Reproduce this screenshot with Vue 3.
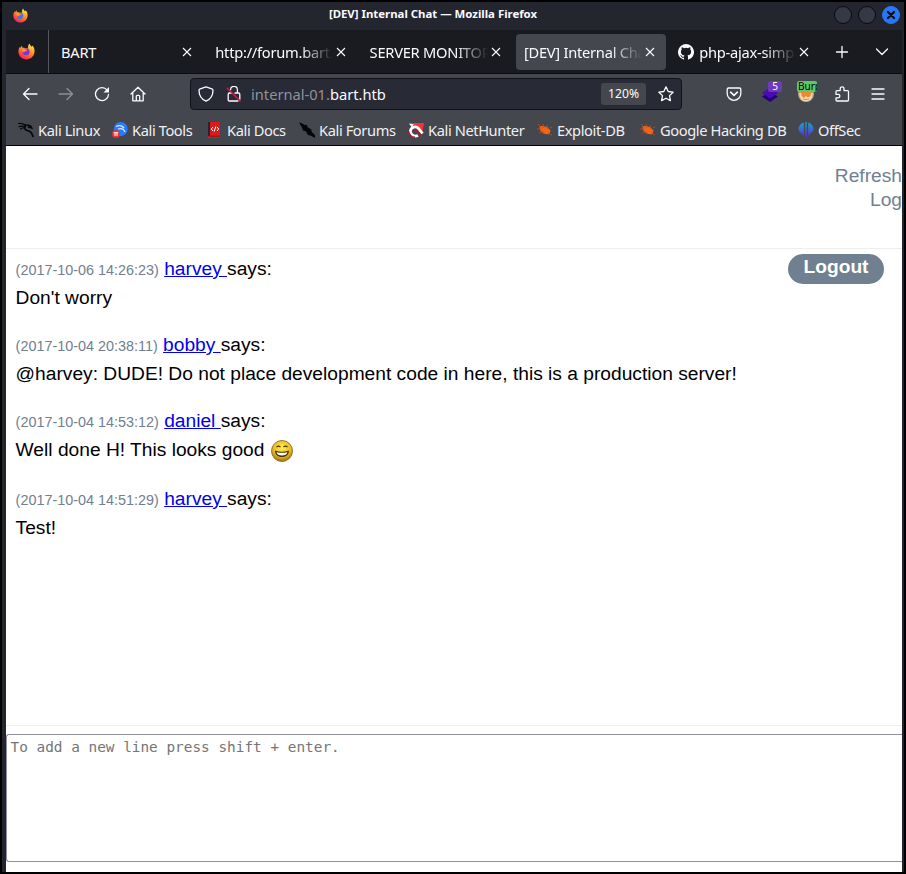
<script setup>
const tabs = [
  { title: 'BART' },
  { title: 'http://forum.bart.htb', fade: true },
  { title: 'SERVER MONITOR', fade: true },
  { title: '[DEV] Internal Chat', fade: true, active: true },
  { title: 'php-ajax-simple', fade: true, github: true },
]

const bookmarks = [
  { label: 'Kali Linux', icon: 'dragon', width: 94 },
  { label: 'Kali Tools', icon: 'tools', width: 95 },
  { label: 'Kali Docs', icon: 'docs', width: 92 },
  { label: 'Kali Forums', icon: 'forums', width: 109 },
  { label: 'Kali NetHunter', icon: 'nethunter', width: 129 },
  { label: 'Exploit-DB', icon: 'bug', width: 103 },
  { label: 'Google Hacking DB', icon: 'bug', width: 158 },
  { label: 'OffSec', icon: 'offsec', width: 80 },
]

const messages = [
  { time: '2017-10-06 14:26:23', user: 'harvey', text: "Don't worry" },
  { time: '2017-10-04 20:38:11', user: 'bobby', text: '@harvey: DUDE! Do not place development code in here, this is a production server!' },
  { time: '2017-10-04 14:53:12', user: 'daniel', text: 'Well done H! This looks good', smiley: true },
  { time: '2017-10-04 14:51:29', user: 'harvey', text: 'Test!' },
]
</script>

<template>
  <div class="window">
    <svg class="defs" width="0" height="0" aria-hidden="true">
      <defs>
        <linearGradient id="flame" x1="0.8" y1="0" x2="0.25" y2="1">
          <stop offset="0" stop-color="#fff044" />
          <stop offset="0.4" stop-color="#ff9a2b" />
          <stop offset="0.75" stop-color="#ff4a3c" />
          <stop offset="1" stop-color="#ee1e70" />
        </linearGradient>
        <linearGradient id="offsec" gradientUnits="userSpaceOnUse" x1="0" y1="0" x2="0" y2="16">
          <stop offset="0" stop-color="#10acc8" />
          <stop offset="1" stop-color="#6a1fdc" />
        </linearGradient>
        <radialGradient id="smile" cx="0.5" cy="0.35" r="0.65">
          <stop offset="0" stop-color="#fff25a" />
          <stop offset="0.65" stop-color="#e8b916" />
          <stop offset="1" stop-color="#9a6d12" />
        </radialGradient>
        <symbol id="fox" viewBox="0 0 16 16">
          <path fill="url(#flame)" d="M10.8.5c.4 1.4 1.2 2 2.1 3 .4-.3.6-.8.7-1.2 1.7 2 2.2 4 1.9 6.5-.5 4-3.7 6.7-7.5 6.7C3.8 15.500.6 12.300.4 8.500c-.1-2 .5-3.800 1.400-5 .1.600.200.900.400 1.200.300-.900.800-1.700 1.500-2.200.100.900.400 1.600.900 2.100.600-.100 1.300 0 1.900.300 1-.300 2.200.100 2.700.800C9.400 4 9.600 1.600 10.800.500z" />
          <circle class="globe" cx="7.600" cy="8.300" r="3.300" />
          <path fill="#ff922e" d="M3.500 5.500c1.500-.600 3-.300 3.500.500l1.800.300c-.200 1-1.100 1.200-1.800 1.400-.500.600-1.200.800-1.700 1.100C4.300 8.600 3.400 7 3.500 5.500z" />
        </symbol>
      </defs>
    </svg>

    <header class="titlebar">
      <svg class="fox blue" width="15" height="15"><use href="#fox" /></svg>
      <span class="caption">[DEV] Internal Chat — Mozilla Firefox</span>
      <div class="controls">
        <i class="control"></i>
        <i class="control"></i>
        <i class="control close">
          <svg width="18" height="18" viewBox="0 0 18 18"><path d="M6 6l6 6M12 6l-6 6" stroke="#0c1118" stroke-width="2.400" stroke-linecap="round" /></svg>
        </i>
      </div>
    </header>

    <nav class="tabbar">
      <div class="view"><svg class="fox violet" width="17" height="17"><use href="#fox" /></svg></div>
      <div class="tabs">
        <div v-for="t in tabs" :key="t.title" class="tab" :class="{ active: t.active }">
          <svg v-if="t.github" class="github" width="16" height="16" viewBox="0 0 16 16"><path fill="#fbfbfe" d="M8 0a8 8 0 0 0-2.530 15.590c.4.070.550-.170.550-.380v-1.490c-2.230.480-2.700-.950-2.700-.950-.360-.920-.890-1.170-.890-1.170-.730-.500.050-.490.050-.490.810.060 1.230.830 1.230.830.720 1.230 1.870.870 2.330.670.070-.520.280-.880.510-1.080-1.780-.200-3.640-.890-3.640-3.950 0-.870.310-1.590.820-2.150-.080-.200-.360-1.020.080-2.120 0 0 .670-.210 2.200.820a7.600 7.600 0 0 1 4 0c1.530-1.040 2.200-.820 2.200-.820.440 1.100.160 1.920.080 2.120.510.560.820 1.270.820 2.150 0 3.070-1.870 3.750-3.650 3.950.290.250.540.730.540 1.480v2.200c0 .210.150.460.550.380A8 8 0 0 0 8 0z" /></svg>
          <span class="title" :class="{ fade: t.fade }">{{ t.title }}</span>
          <svg class="x" width="16" height="16" viewBox="0 0 16 16"><path d="M4 4l8 8M12 4l-8 8" /></svg>
        </div>
      </div>
      <svg class="plus line" width="16" height="16" viewBox="0 0 16 16"><path d="M8 2.500v11M2.500 8h11" /></svg>
      <svg class="chevron line" width="16" height="16" viewBox="0 0 16 16"><path d="M2.500 5L8 10.500 13.500 5" /></svg>
    </nav>

    <div class="toolbar">
      <div class="nav">
        <svg class="line" width="16" height="16" viewBox="0 0 16 16"><path d="M15 8H1.500M7 2.500L1.500 8 7 13.500" /></svg>
        <svg class="line dim" width="16" height="16" viewBox="0 0 16 16"><path d="M1 8h13.500M9 2.500L14.500 8 9 13.500" /></svg>
        <svg class="line" width="16" height="16" viewBox="0 0 16 16"><path d="M13.200 4.200A6.500 6.500 0 1 0 14.500 8.500" /><path fill="#fbfbfe" stroke="none" d="M15 1v5.500H9.500z" /></svg>
        <svg class="line" width="16" height="16" viewBox="0 0 16 16"><path d="M1 8l7-6.700L15 8M2.800 7v7.800h10.400V7M6.300 14.500V10.300c0-.7.4-1 1-1h1.400c.6 0 1 .3 1 1v4.200" /></svg>
      </div>
      <div class="urlbar">
        <svg class="line" width="16" height="16" viewBox="0 0 16 16"><path d="M8 .900l5.800 2c.800.300 1.200.700 1.200 1.400 0 5.500-2.500 9-7 10.900C3.500 13.300 1 9.800 1 4.300c0-.700.400-1.100 1.200-1.400z" /></svg>
        <svg class="line lock" width="16" height="16" viewBox="0 0 16 16"><path d="M4.600 3.800A3.400 3.400 0 0 1 11.400 3.700V7M9 7h3.500c.900 0 1.300.500 1.300 1.300v5M12 15H3.500c-.900 0-1.300-.400-1.300-1.200V8.300C2.200 7.500 2.600 7 3.500 7h2" /><path class="strike" d="M1.300 2.300l12.800 12.700" /></svg>
        <span class="url">internal-01.<b>bart.htb</b></span>
        <span class="zoom">120%</span>
        <svg class="line star" width="16" height="16" viewBox="0 0 16 16"><path d="M8 .900l2.200 4.600 4.900.700-3.600 3.400.900 5L8 12.200l-4.400 2.400.900-5L.900 6.200l4.900-.700z" /></svg>
      </div>
      <div class="extensions">
        <svg class="line" width="16" height="16" viewBox="0 0 16 16"><path d="M2.500 2h11c.800 0 1.300.500 1.300 1.200v4.300a6.800 6.800 0 0 1-13.600 0V3.200C1.200 2.500 1.700 2 2.500 2z" /><path d="M4.600 6.200L8 9.400l3.400-3.200" stroke-width="1.600" /></svg>
        <div class="ext">
          <svg width="18" height="18" viewBox="0 0 18 18"><path fill="#230078" d="M1 11.500L9 7l8 4.500L9 17z" /><path fill="#4c0ab6" d="M1 8l8-5.500L17 8l-8 5.500z" /></svg>
          <span class="badge purple">5</span>
        </div>
        <div class="ext">
          <svg width="18" height="18" viewBox="0 0 18 18"><circle cx="9" cy="9" r="8" fill="#c6a575" /><path fill="#f3d8b1" d="M2.500 8h13v2c-1 4.500-3 6.300-6.500 6.300S3.500 14.500 2.500 10z" /><path fill="#ef8b27" d="M4 7h10.500l-1 4-2.500 1.500-2-1.500-2 2-2.500-2z" /><path d="M5.500 10.500l3-1.500M10 9l3 2M6 14c2 .8 4 .8 6 0" stroke="#c8935c" fill="none" /></svg>
          <span class="badge green">Burp</span>
        </div>
        <svg class="line" width="16" height="16" viewBox="0 0 16 16"><path d="M2 7.500V5.600c0-.6.400-1 1-1h3.200V2.700a1.900 1.900 0 0 1 3.800 0v1.900h3.500c.6 0 1 .4 1 1V14c0 .6-.4 1-1 1H3c-.6 0-1-.4-1-1v-2.200h2.200a1.700 1.700 0 0 0 0-3.400H2z" /></svg>
        <svg class="line" width="16" height="16" viewBox="0 0 16 16"><path d="M2 3h12M2 8h12M2 13h12" /></svg>
      </div>
    </div>

    <div class="bookmarks">
      <div v-for="b in bookmarks" :key="b.label" class="bookmark" :style="{ width: b.width + 'px' }">
        <svg width="16" height="16" viewBox="0 0 16 16">
          <g v-if="b.icon === 'dragon'" fill="none" stroke="#08090b" stroke-linecap="round">
            <path d="M.5 1.500c3-.500 5 .200 7 1.500l3 .200M1 4.700c2-.700 4-.800 6.500-.200M2.500 7c1.500-1 3-1.500 4.500-1.400" stroke-width="1.200" />
            <path d="M7.500 3C6 6 6.500 8 9.500 8.700c3 .600 4.500 2 5.500 5.800M10 3.300l2.700 1 .8 1.500-3-.800" stroke-width="1.700" />
          </g>
          <path v-else-if="b.icon === 'forums'" fill="#050608" d="M0 .5l3 .7L5.500 3l2-.3L9 5.500l3 1.800 1 3L16 13v3l-4.500-2.500L9 13l-2-3.500L4 8.500 3 5.500z" />
          <g v-else-if="b.icon === 'tools'">
            <circle cx="8.700" cy="7" r="7" fill="#267cff" />
            <path d="M4 4.500c3-1.300 6-.8 8 1.500M6 7c3-.8 6 0 7 3" fill="none" stroke="#d9eaff" stroke-width="1.200" />
            <circle cx="4" cy="12" r="4" fill="#e83232" />
            <path d="M1.700 10.700h4.600M3 11v3M5 11v3" stroke="#fff" />
          </g>
          <g v-else-if="b.icon === 'docs'">
            <rect x="1" width="12" height="16" rx="1" fill="#dc1a1a" />
            <path d="M1 0h2v14H1z" fill="#272239" /><path d="M2 13.500h11V15H2z" fill="#9d1717" />
            <path d="M6 5L4.300 7 6 9M10 5l1.700 2L10 9M8.800 4.500L7.200 9.500" fill="none" stroke="#fff" />
          </g>
          <g v-else-if="b.icon === 'nethunter'">
            <path d="M1 1h15l-1.500 8L8 5z" fill="#f5333b" />
            <path d="M1 1.500l5 1L3.500 5z" fill="#fff" />
            <path d="M10 13.500C6 15.500 1.800 12 2.500 8.500 3.500 4.500 8 4 10.500 6.500l4 5" fill="none" stroke="#fff" stroke-width="2.800" />
            <path d="M.5 9c.5 3.500 3 6 6.500 6.300M6.500 8.500c2-1 3 .5 6.500 5.500" fill="none" stroke="#b81238" stroke-width="1.500" />
          </g>
          <g v-else-if="b.icon === 'bug'">
            <path fill="#f26518" d="M2.500 4.500C6 3 11 5 13.500 8.500l-1 3.500C9 13 4.500 11 3 8z" />
            <path d="M1 2l4 4M0 7h5M2 11l4-2M6 2l1 4M10 3l1 4M13 6l2-1M11 11l4 2M7 10l-1 2" stroke="#c94c16" stroke-width=".8" />
          </g>
          <g v-else fill="url(#offsec)">
            <path d="M7.300 0h1.400v16H7.300z" />
            <path d="M5.800.5v14.300C4.800 13.500 4.500 12.300 3.300 11.300 1.500 10 .5 8.500.5 6.800.8 3.500 3 1.300 5.800.5zM10.200.5v14.300c1-1.300 1.300-2.500 2.500-3.500 1.800-1.300 2.800-2.800 2.800-4.500-.3-3.300-2.500-5.500-5.300-6.300z" />
          </g>
        </svg>
        <span>{{ b.label }}</span>
      </div>
    </div>

    <main class="page">
      <div class="links"><a>Refresh</a><a>Log</a></div>
      <section class="chat">
        <div class="log">
          <article v-for="m in messages" :key="m.time" class="message" :class="{ tall: m.smiley }">
            <p><small>({{ m.time }})</small> <a class="user">{{ m.user }}&nbsp;</a>says:</p>
            <p class="body">
              <span>{{ m.text }}</span>
              <svg v-if="m.smiley" class="smiley" width="24" height="24" viewBox="0 0 24 24">
                <circle cx="12" cy="12" r="10.500" fill="url(#smile)" stroke="#9b7440" />
                <path d="M6.500 8.200q2-2 4 0M13.500 8.200q2-2 4 0" fill="none" stroke="#4a3306" stroke-width="1.200" />
                <path d="M5 11.500q7 2.500 14 0c0 4-2.500 6.500-7 6.500s-7-2.500-7-6.500z" fill="#4a3306" />
                <path d="M6.500 13.200q5.500 1.300 11 0c-.6 2.200-2.500 3.300-5.500 3.300s-4.900-1.100-5.500-3.300z" fill="#fff" />
              </svg>
            </p>
          </article>
        </div>
        <a class="logout">Logout</a>
      </section>
      <div class="composer">To add a new line press shift + enter.</div>
    </main>
  </div>
</template>

<style>
body { margin: 0; background: #000; }
</style>

<style scoped>
* { box-sizing: border-box; }
.window {
  display: flex; flex-direction: column; width: 906px; height: 874px; overflow: hidden;
  padding: 0 2px 0 4px; background: #23252f; border: 2px solid #000;
  font-family: "Noto Sans", sans-serif; color: #fbfbfe;
}
.defs { position: absolute; }
svg { flex: none; display: block; }
.line { fill: none; stroke: #fbfbfe; stroke-width: 1.3; stroke-linecap: round; stroke-linejoin: round; }
.dim { opacity: .4; }
.titlebar { display: flex; align-items: center; height: 28px; flex: none; padding: 0 2px 2px 7px; }
.blue { color: #3c78e8; }
.violet { color: #7b38d8; }
.globe { fill: currentColor; }
.caption { flex: 1; text-align: center; font-size: 11.4px; line-height: 16px; font-weight: 700; padding: 0 0 2px 4px; white-space: nowrap; }
.controls { display: flex; gap: 6px; }
.control { width: 18px; height: 18px; border-radius: 50%; background: #343945; border: 1px solid #090b0e; }
.close { background: #2777f7; border-color: #2777f7; }
.close svg { margin: -1px; }

.tabbar { display: flex; align-items: center; height: 44px; flex: none; background: #1a1b20; border-bottom: 1px solid #0b0c0e; }
.view { width: 43px; height: 43px; border-right: 1px solid #55565a; display: flex; align-items: center; padding-left: 12px; }
.tabs { display: flex; gap: 4.3px; margin-left: 4px; }
.tab { display: flex; align-items: center; width: 150px; height: 36px; padding: 0 8px; border-radius: 4px; font-size: 14.67px; letter-spacing: -.25px; }
.tab.active { background: #44474e; }
.title { flex: 1; min-width: 0; overflow: hidden; white-space: nowrap; }
.title.fade { mask-image: linear-gradient(to left, transparent, #000 32px); }
.github { margin-right: 5px; }
.x { fill: none; stroke: #fbfbfe; stroke-width: 1.1; }
.plus { margin-left: 13.500px; }
.chevron { margin-left: 24.500px; }

.toolbar { display: flex; align-items: center; height: 41px; flex: none; padding-bottom: 1px; background: #44474e; }
.nav { display: flex; gap: 20px; padding-left: 16px; width: 184px; }
.urlbar { display: flex; align-items: center; width: 492px; height: 32px; padding: 0 7px; background: #282a36; border: 1px solid #111217; border-radius: 4px; font-size: 14.67px; }
.lock { margin-left: 12px; }
.strike { stroke: #e2144f; stroke-width: 1.5; }
.url { flex: 1; margin-left: 9px; color: #91929b; }
.url b { font-weight: 400; color: #fbfbfe; }
.zoom { width: 45px; height: 22px; line-height: 22px; text-align: center; font-size: 12.2px; background: #44474e; border-radius: 3px; }
.star { margin: 0 0 0 12px; }
.extensions { display: flex; align-items: center; gap: 20px; margin-left: 44px; }
.ext { position: relative; width: 16px; height: 18px; }
.ext svg { margin-left: -1px; }
.badge { position: absolute; left: 6px; top: -4px; height: 11px; line-height: 11px; border-radius: 2px; font-size: 10px; text-align: center; overflow: hidden; }
.purple { width: 14px; background: #7038bd; }
.green { left: -1px; width: 20px; background: #5fc969; color: #000; padding-left: 1px; text-align: left; }

.bookmarks { display: flex; align-items: center; height: 31px; flex: none; padding: 0 0 1px 12px; background: #44474e; border-bottom: 1px solid #000; font-size: 14.67px; letter-spacing: -.4px; color: #f0f0f3; }
.bookmark { display: flex; align-items: center; gap: 4px; flex: none; white-space: nowrap; }

.page { flex: 1; min-height: 0; display: flex; flex-direction: column; background: #fff; color: #000; font: 19.2px "Liberation Sans", Arial, sans-serif; }
.links { display: flex; flex-direction: column; align-items: flex-end; height: 102px; padding-top: 18px; line-height: 24px; color: #708090; flex: none; }
.chat { display: flex; justify-content: space-between; align-items: flex-start; height: 478px; flex: none; border-top: 1px solid #eee; border-bottom: 1px solid #eee; padding: 5px 18px 0 9.6px; }
.log { flex: 1; }
.message { height: 76px; }
.message.tall { height: 78px; }
.message p { margin: 0; height: 29px; line-height: 29px; white-space: nowrap; }
.message .body { display: flex; }
small { font-size: 14.4px; color: #708090; }
.user { color: #00e; text-decoration: underline; }
.smiley { margin: 4px 0 0 6px; }
.logout { width: 96px; height: 30px; line-height: 26px; border-radius: 15px; background: #708090; color: #fff; font-weight: 700; text-align: center; }
.composer { height: 128px; margin-top: 8px; flex: none; border: 1px solid #8f8f9d; border-right: 0; border-radius: 3px 0 0 3px; padding: 3px 3.5px; font: 14.4px/18px "DejaVu Sans Mono", monospace; color: #757575; }
</style>
